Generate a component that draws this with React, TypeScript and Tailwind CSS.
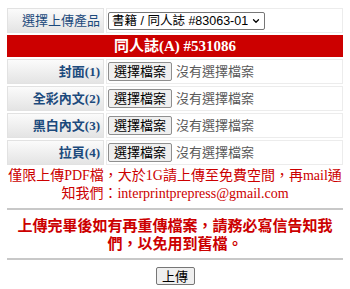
import { ChevronDown } from 'lucide-react';

const serif = 'font-["Liberation_Serif","Noto_Sans_CJK_TC",serif]';
const sans = 'font-["Liberation_Sans","Noto_Sans_CJK_TC",sans-serif]';

const fileRows = ['封面(1)', '全彩內文(2)', '黑白內文(3)', '拉頁(4)'];

function LabelCell({ children }: { children: React.ReactNode }) {
  return (
    <td className={`w-[97px] h-[25px] p-0 pr-[3px] text-right align-middle border border-[#e2e2e2] bg-gradient-to-b from-[#fbfbfb] to-[#e4e4e4] text-[13px] leading-[16px] font-bold text-[#1c4a7c] ${serif}`}>
      {children}
    </td>
  );
}

function FilePicker() {
  return (
    <div className={`flex items-center gap-[4px] pl-[1px] ${sans}`}>
      <button className="h-[19px] w-[64px] text-[13px] leading-none text-black bg-[#efefef] border border-[#8f8f8f] rounded-[2px]">
        選擇檔案
      </button>
      <span className="text-[13px] leading-[16px] text-[#5a5a5a]">沒有選擇檔案</span>
    </div>
  );
}

export default function App() {
  return (
    <div className="w-[350px] h-[289px] bg-white pt-[6px] overflow-hidden">
      <table className="w-[340px] mx-auto border-separate border-spacing-[2px]">
        <tbody>
          <tr>
            <LabelCell>
              <span className="font-normal">選擇上傳產品</span>
            </LabelCell>
            <td className="h-[25px] p-0 border border-[#ececec] pl-[1px]">
              <div className={`flex items-center gap-[3px] h-[18px] w-[157px] pl-[3px] pr-[3px] border border-[#767676] rounded-[2px] text-[12.5px] leading-[16px] text-black whitespace-nowrap ${sans}`}>
                <span className="flex-1 overflow-hidden">書籍 / 同人誌 #83063-01</span>
                <ChevronDown className="w-[10px] h-[10px] shrink-0" strokeWidth={3} />
              </div>
            </td>
          </tr>
          <tr>
            <td colSpan={2} className={`h-[22px] p-0 bg-[#cc0000] text-center text-white text-[15px] leading-[18px] font-bold ${serif}`}>
              同人誌(A) #531086
            </td>
          </tr>
          {fileRows.map((label) => (
            <tr key={label}>
              <LabelCell>{label}</LabelCell>
              <td className="h-[25px] p-0 border border-[#ececec]">
                <FilePicker />
              </td>
            </tr>
          ))}
        </tbody>
      </table>
      <div className={`mx-[7px] text-center text-[14px] leading-[18px] text-[#cc0000] ${serif}`}>
        僅限上傳PDF檔，大於1G請上傳至免費空間，再mail通知我們：interprintprepress@gmail.com
      </div>
      <hr className="mx-[7px] mt-[5px] border-t-2 border-[#c8c8c8]" />
      <div className={`mx-[7px] px-[8px] mt-[7px] text-center text-[15px] leading-[18px] font-bold text-[#cc0000] ${serif}`}>
        上傳完畢後如有再重傳檔案，請務必寫信告知我們，以免用到舊檔。
      </div>
      <hr className="mx-[7px] mt-[5px] border-t-2 border-[#c8c8c8]" />
      <div className="flex justify-center mt-[7px]">
        <button className={`h-[18px] w-[39px] text-[13px] leading-none text-black bg-[#efefef] border border-[#767676] rounded-[2px] ${sans}`}>
          上傳
        </button>
      </div>
    </div>
  );
}
